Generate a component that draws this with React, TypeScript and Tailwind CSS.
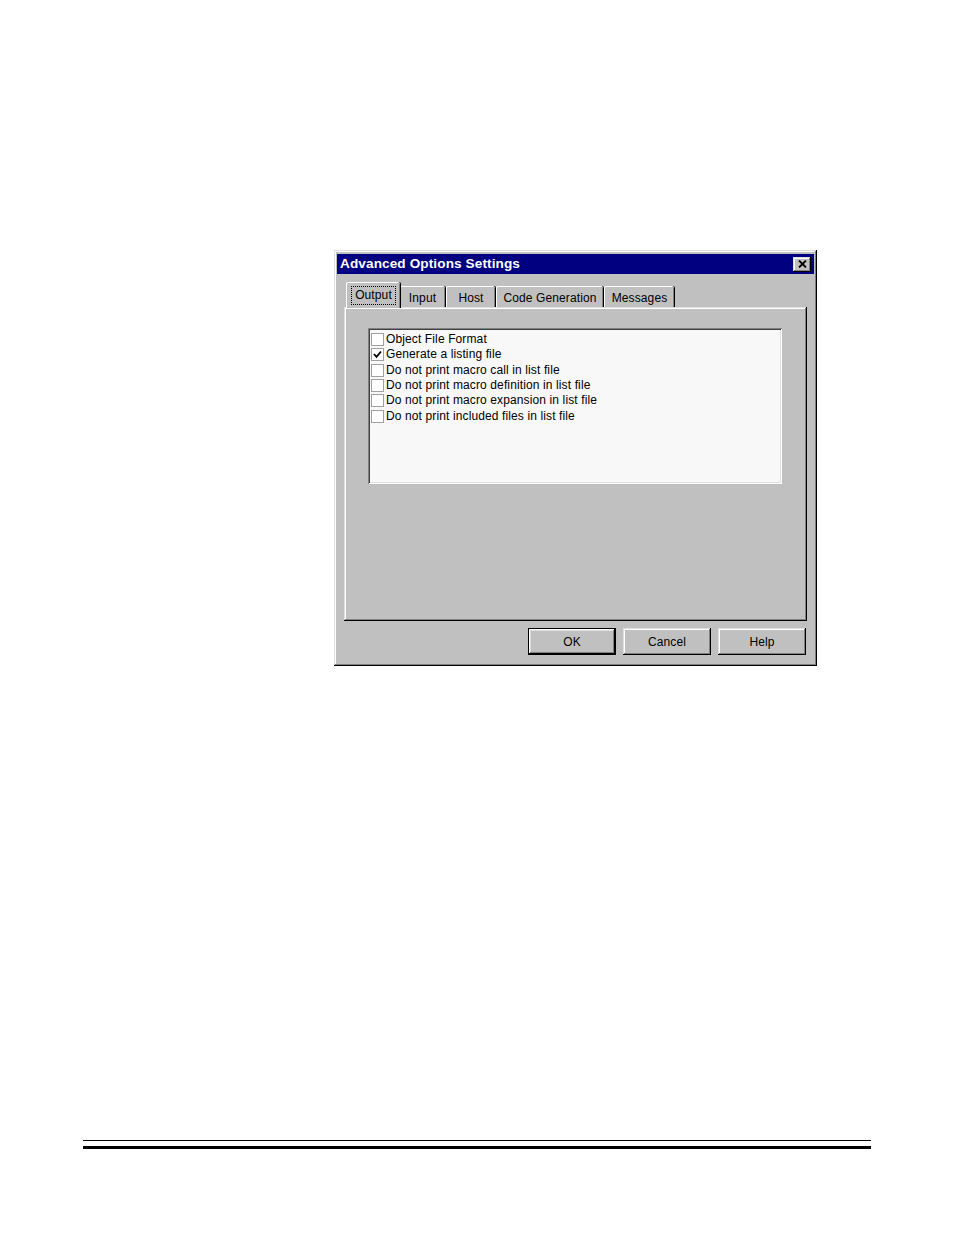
import React from "react";

const raised =
  "shadow-[inset_-1px_-1px_#000000,inset_1px_1px_#dfdfdf,inset_-2px_-2px_#808080,inset_2px_2px_#ffffff]";
const sunken =
  "shadow-[inset_1px_1px_#808080,inset_-1px_-1px_#ffffff,inset_2px_2px_#404040,inset_-2px_-2px_#dfdfdf]";

const items: { label: string; checked: boolean }[] = [
  { label: "Object File Format", checked: false },
  { label: "Generate a listing file", checked: true },
  { label: "Do not print macro call in list file", checked: false },
  { label: "Do not print macro definition in list file", checked: false },
  { label: "Do not print macro expansion in list file", checked: false },
  { label: "Do not print included files in list file", checked: false },
];

function Check({ checked }: { checked: boolean }) {
  return (
    <div className="w-[13px] h-[13px] bg-white border border-[#a0a0a0] flex items-center justify-center shrink-0">
      {checked && (
        <svg width="9" height="9" viewBox="0 0 9 9">
          <path d="M1 4 L3.5 6.8 L8 1.5" stroke="#000" strokeWidth="1.8" fill="none" />
        </svg>
      )}
    </div>
  );
}

function Tab({ label, selected, w }: { label: string; selected?: boolean; w: string }) {
  if (selected) {
    return (
      <div
        className={`${w} h-[26px] -mb-[1px] -mr-[1px] relative z-10 bg-[#c0c0c0] border-l border-t border-white rounded-tl-[2px] rounded-tr-[2px] flex items-start justify-center pt-[3px] shadow-[inset_-1px_0_#808080,1px_0_#000000]`}
      >
        <span className="border border-dotted border-black px-[3px] leading-[17px]">{label}</span>
      </div>
    );
  }
  return (
    <div
      className={`${w} h-[21px] mt-[3px] bg-[#c0c0c0] border-l border-t border-white rounded-tl-[2px] rounded-tr-[2px] flex items-start justify-center pt-[4px] shadow-[inset_-1px_0_#808080,1px_0_#000000] mr-[1px]`}
    >
      <span className="leading-[15px]">{label}</span>
    </div>
  );
}

function Button({ label, def }: { label: string; def?: boolean }) {
  return (
    <div
      className={`w-[88px] h-[27px] bg-[#c0c0c0] flex items-center justify-center ${
        def
          ? "border border-black shadow-[inset_-1px_-1px_#000000,inset_1px_1px_#ffffff,inset_-2px_-2px_#808080,inset_2px_2px_#dfdfdf]"
          : raised
      }`}
    >
      <span>{label}</span>
    </div>
  );
}

export default function App() {
  return (
    <div
      className="w-[954px] h-[1235px] bg-white overflow-hidden pt-[250px]"
      style={{ fontFamily: '"Liberation Sans", Arial, sans-serif' }}
    >
      <div className={`ml-[334px] w-[483px] h-[416px] bg-[#c0c0c0] ${raised} pt-[4px] px-[3px] text-[12px] tracking-[0.12px] text-black`}>
        {/* Title bar */}
        <div className="h-[20px] bg-[#000080] flex items-center justify-between pl-[3px] pr-[3px]">
          <span className="text-white font-bold text-[13.6px] tracking-[0.1px]">Advanced Options Settings</span>
          <div className={`w-[18px] h-[15px] bg-[#c0c0c0] ${raised} flex items-center justify-center`}>
            <svg width="9" height="8" viewBox="0 0 9 8">
              <path d="M1 0.5 L8 7.5 M8 0.5 L1 7.5" stroke="#000" strokeWidth="1.8" />
            </svg>
          </div>
        </div>

        {/* Tabs */}
        <div className="mt-[9px] ml-[9px] flex items-end h-[24px]">
          <Tab label="Output" selected w="w-[54px]" />
          <Tab label="Input" w="w-[46px]" />
          <Tab label="Host" w="w-[49px]" />
          <Tab label="Code Generation" w="w-[107px]" />
          <Tab label="Messages" w="w-[70px]" />
        </div>

        {/* Panel */}
        <div className={`ml-[7px] w-[463px] h-[314px] ${raised} pt-[21px] pl-[24px]`}>
          <div className={`w-[414px] h-[156px] bg-[#f8f8f8] ${sunken} pt-[4px] pl-[3px]`}>
            {items.map((it) => (
              <div key={it.label} className="h-[15.3px] flex items-center gap-[2px]">
                <Check checked={it.checked} />
                <span className="leading-[15px] whitespace-nowrap">{it.label}</span>
              </div>
            ))}
          </div>
        </div>

        {/* Buttons */}
        <div className="mt-[7px] flex justify-end gap-[7px] pr-[8px]">
          <Button label="OK" def />
          <Button label="Cancel" />
          <Button label="Help" />
        </div>
      </div>

      {/* Footer rules */}
      <div className="mt-[474px] ml-[83px] w-[788px]">
        <div className="h-[1px] bg-black" />
        <div className="mt-[5px] h-[3px] bg-black" />
      </div>
    </div>
  );
}
